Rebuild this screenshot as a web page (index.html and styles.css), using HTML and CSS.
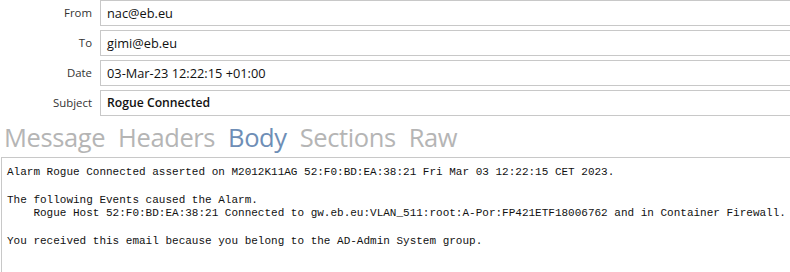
FILE: index.html
```html
<!DOCTYPE html>
<html>
<head>
<meta charset="utf-8">
<link rel="stylesheet" href="styles.css">
</head>
<body>
<div class="fields">
  <div class="label">From</div><div class="field">nac@eb.eu</div>
  <div class="label">To</div><div class="field">gimi@eb.eu</div>
  <div class="label">Date</div><div class="field">03-Mar-23 12:22:15 +01:00</div>
  <div class="label">Subject</div><div class="field bold">Rogue Connected</div>
</div>
<div class="tabs">
  <span class="tab">Message</span>
  <span class="tab">Headers</span>
  <span class="tab active">Body</span>
  <span class="tab">Sections</span>
  <span class="tab">Raw</span>
</div>
<div class="body-pane"><pre>Alarm Rogue Connected asserted on M2012K11AG 52:F0:BD:EA:38:21 Fri Mar 03 12:22:15 CET 2023.

The following Events caused the Alarm.
    Rogue Host 52:F0:BD:EA:38:21 Connected to gw.eb.eu:VLAN_511:root:A-Por:FP421ETF18006762 and in Container Firewall.

You received this email because you belong to the AD-Admin System group.</pre></div>
</body>
</html>
```
FILE: styles.css
```css
html, body {
  margin: 0;
  padding: 0;
  background: #fff;
  overflow: hidden;
}
body {
  width: 790px;
  height: 272px;
  font-family: "Open Sans", "Noto Sans", sans-serif;
  color: #000;
}
.fields {
  display: grid;
  grid-template-columns: 100px 1fr;
  row-gap: 4px;
  margin-right: -4px;
}
.label {
  font-size: 11.4px;
  color: #333;
  text-align: right;
  padding-right: 8px;
  height: 26px;
  line-height: 25px;
}
.field {
  box-sizing: border-box;
  height: 26px;
  border: 1px solid #c8c8c8;
  padding: 0 6px;
  font-size: 12.8px;
  line-height: 24px;
  color: #111;
}
.field.bold {
  font-weight: 600;
  font-size: 12.2px;
}
.tabs {
  display: flex;
  gap: 13px;
  padding-left: 4px;
  height: 41px;
  align-items: center;
}
.tab {
  font-size: 25.5px;
  color: #b5b5b5;
  letter-spacing: -0.4px;
}
.tab.active {
  color: #6e8eb6;
}
.body-pane {
  margin-left: 1px;
  border-top: 1px solid #c8c8c8;
  border-left: 1px solid #c8c8c8;
  height: 120px;
}
.body-pane pre {
  margin: 0;
  padding: 8px 0 0 5px;
  font-family: "Liberation Mono", monospace;
  font-size: 11px;
  line-height: 13.75px;
  color: #111;
}
```
